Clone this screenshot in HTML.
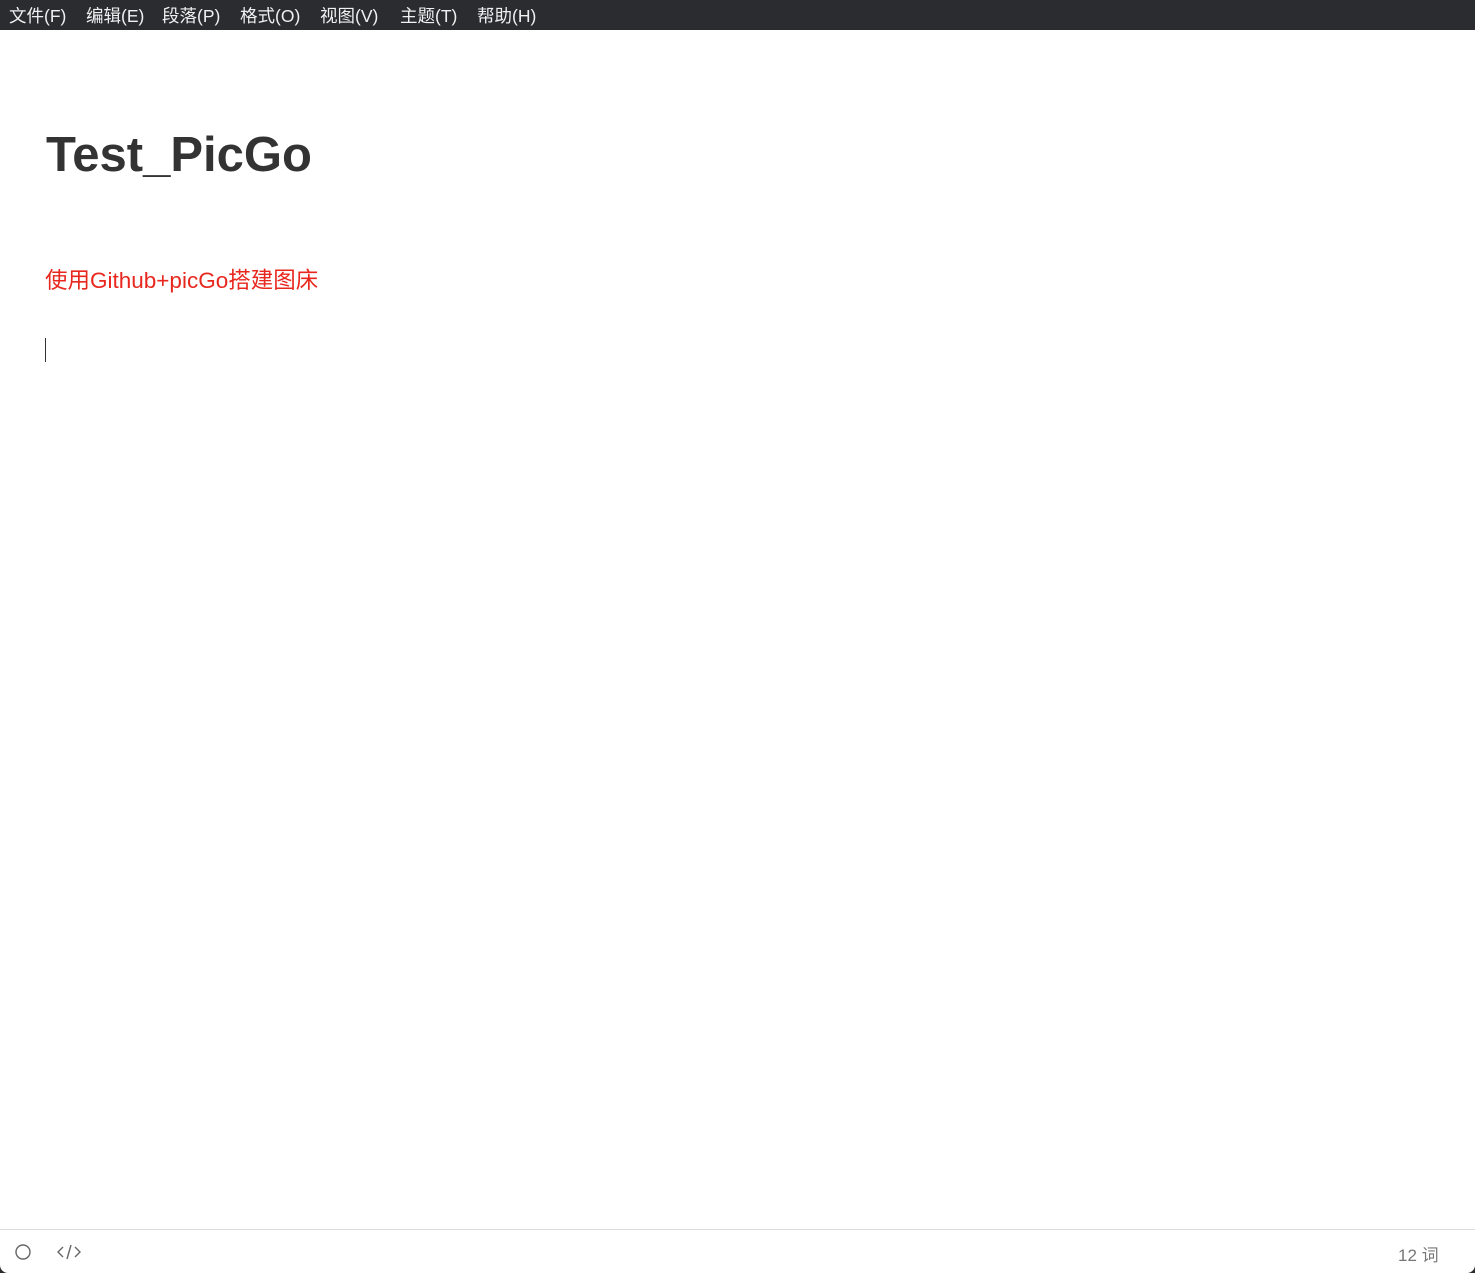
<!DOCTYPE html>
<html><head><meta charset="utf-8"><style>
html,body{margin:0;padding:0;width:1475px;height:1273px;overflow:hidden;background:#2a2c30;font-family:"Liberation Sans","Noto Sans CJK SC",sans-serif;}
.menu{position:absolute;top:0;left:0;width:1475px;height:30px;background:#2a2c30;color:#f0f0f0;font-size:17.5px;line-height:33px;}
.menu span{position:absolute;top:0;}
.page{position:absolute;top:30px;left:0;width:1475px;height:1243px;background:#fff;border-radius:0 0 8px 8px;}
h1{position:absolute;left:46px;top:97px;margin:0;font-size:49px;font-weight:bold;color:#333;}
.p{position:absolute;left:45px;top:233px;font-size:22.5px;color:#e8281e;}
.cursor{position:absolute;left:45px;top:308px;width:1px;height:24px;background:#333;}
.foot{position:absolute;left:0;top:1199px;width:1475px;height:1px;background:#ddd;}
.wc{position:absolute;left:1398px;top:1211px;font-size:17px;color:#777;}
</style></head><body>
<div class="menu">
<span style="left:9px">文件(F)</span><span style="left:86px">编辑(E)</span><span style="left:162px">段落(P)</span><span style="left:240px">格式(O)</span><span style="left:320px">视图(V)</span><span style="left:400px">主题(T)</span><span style="left:477px">帮助(H)</span>
</div>
<div class="page">
<h1>Test_PicGo</h1>
<div class="p">使用Github+picGo搭建图床</div>
<div class="cursor"></div>
<div class="foot"></div>
<svg style="position:absolute;left:13px;top:1213px" width="20" height="20"><circle cx="10" cy="9" r="7" fill="none" stroke="#666" stroke-width="1.4"/></svg>
<svg style="position:absolute;left:56px;top:1213px" width="26" height="18"><path d="M7 4L2 9L7 14M19 4L24 9L19 14M15 2L11 16" fill="none" stroke="#666" stroke-width="1.4"/></svg>
<div class="wc">12 词</div>
</div>
</body></html>
